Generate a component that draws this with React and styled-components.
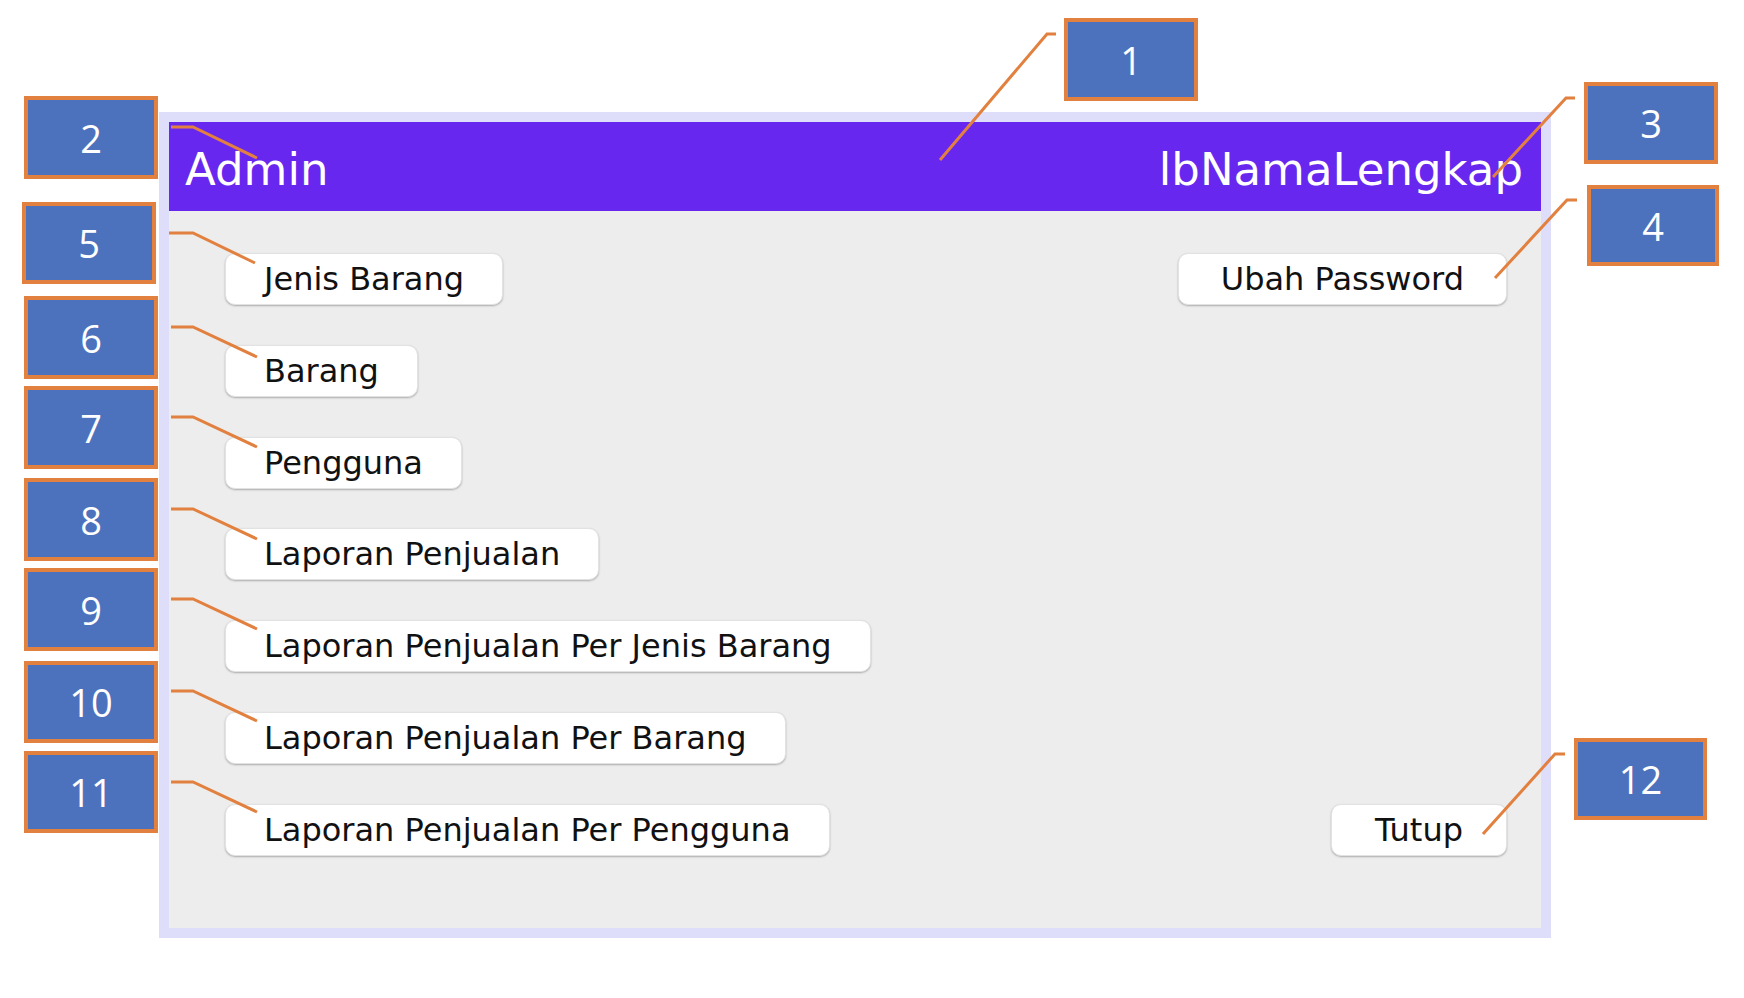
import styled, { createGlobalStyle } from "styled-components";

const GlobalStyle = createGlobalStyle`
  html, body {
    margin: 0;
    padding: 0;
    background: #ffffff;
  }
  * {
    box-sizing: border-box;
  }
`;

const Canvas = styled.div`
  position: relative;
  width: 1744px;
  height: 998px;
  overflow: hidden;
  background: #ffffff;
  padding: 112px 0 0 159px;
`;

// jendela menu utama
const Frame = styled.div`
  width: 1392px;
  height: 826px;
  padding: 10px;
  background: #dfdefa;
  display: flex;
  flex-direction: column;
`;

const Header = styled.div`
  height: 89px;
  flex: none;
  display: flex;
  align-items: center;
  justify-content: space-between;
  padding: 6px 18px 0 16px;
  background: #6827ef;
  color: #ffffff;
  font-family: "DejaVu Sans", "Liberation Sans", sans-serif;
  font-size: 45px;
  line-height: 1;
`;

const Body = styled.div`
  flex: 1;
  background: #ededed;
  padding: 42px 34px 0 56px;
  display: grid;
  grid-template-columns: 1fr auto;
  grid-template-rows: repeat(7, 52px);
  row-gap: 39.8px;
  align-items: start;
`;

const MenuButton = styled.button`
  grid-column: ${(p) => (p.$right ? 2 : 1)};
  grid-row: ${(p) => p.$row};
  justify-self: ${(p) => (p.$right ? "end" : "start")};
  height: 52px;
  padding: 0 ${(p) => p.$pad || 38}px;
  border: 1px solid #e2e2e2;
  border-radius: 10px;
  background: #ffffff;
  box-shadow: 0 1px 2px rgba(0, 0, 0, 0.28);
  color: #111111;
  font-family: "DejaVu Sans", "Liberation Sans", sans-serif;
  font-size: 32px;
  line-height: 1;
  white-space: nowrap;
  cursor: pointer;
`;

const Callout = styled.div`
  position: absolute;
  left: ${(p) => p.$x}px;
  top: ${(p) => p.$y}px;
  width: ${(p) => p.$w || 134}px;
  height: ${(p) => p.$h || 83}px;
  border: 4px solid #e2813f;
  background: #4d72bd;
  color: #ffffff;
  display: flex;
  align-items: center;
  justify-content: center;
  font-family: "Open Sans", "Noto Sans", sans-serif;
  font-size: 38px;
  line-height: 1;
`;

const Leaders = styled.svg`
  position: absolute;
  left: 0;
  top: 0;
  pointer-events: none;
`;

const callouts = [
  { n: 1, x: 1064, y: 18 },
  { n: 2, x: 24, y: 96 },
  { n: 3, x: 1584, y: 82, h: 82 },
  { n: 4, x: 1587, y: 185, w: 132, h: 81 },
  { n: 5, x: 22, y: 202, h: 82 },
  { n: 6, x: 24, y: 296 },
  { n: 7, x: 24, y: 386 },
  { n: 8, x: 24, y: 478 },
  { n: 9, x: 24, y: 568 },
  { n: 10, x: 24, y: 661, h: 82 },
  { n: 11, x: 24, y: 751, h: 82 },
  { n: 12, x: 1574, y: 738, w: 133, h: 82 },
];

const leaders = [
  "1056,34 1047,34 940,160",
  "171,127 193,127 257,158",
  "1575,98 1566,98 1493,177",
  "1577,200 1567,200 1495,278",
  "169,233 193,233 255,263",
  "171,327 193,327 257,357",
  "171,417 193,417 257,447",
  "171,509 193,509 257,539",
  "171,599 193,599 257,629",
  "171,691 193,691 257,721",
  "171,782 193,782 257,812",
  "1565,754 1555,754 1483,834",
];

const menu = [
  "Jenis Barang",
  "Barang",
  "Pengguna",
  "Laporan Penjualan",
  "Laporan Penjualan Per Jenis Barang",
  "Laporan Penjualan Per Barang",
  "Laporan Penjualan Per Pengguna",
];

const App = () => {
  return (
    <>
      <GlobalStyle />
      <Canvas>
        <Frame>
          <Header>
            <span>Admin</span>
            <span>lbNamaLengkap</span>
          </Header>
          <Body>
            {menu.map((label, i) => (
              <MenuButton key={label} $row={i + 1}>
                {label}
              </MenuButton>
            ))}
            <MenuButton $right $row={1} $pad={42}>
              Ubah Password
            </MenuButton>
            <MenuButton $right $row={7} $pad={43}>
              Tutup
            </MenuButton>
          </Body>
        </Frame>

        {/* anotasi nomor */}
        <Leaders width="1744" height="998" viewBox="0 0 1744 998">
          {leaders.map((pts) => (
            <polyline
              key={pts}
              points={pts}
              fill="none"
              stroke="#e2813f"
              strokeWidth="3"
              strokeLinejoin="miter"
            />
          ))}
        </Leaders>
        {callouts.map((c) => (
          <Callout key={c.n} $x={c.x} $y={c.y} $w={c.w} $h={c.h}>
            {c.n}
          </Callout>
        ))}
      </Canvas>
    </>
  );
};

export default App;
